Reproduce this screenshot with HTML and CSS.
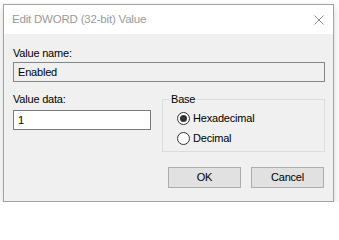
FILE: index.html
```html
<!DOCTYPE html>
<html>
<head>
<meta charset="utf-8">
<link rel="stylesheet" href="styles.css">
</head>
<body>
<div class="window">
  <div class="titlebar">
    <span class="title">Edit DWORD (32-bit) Value</span>
    <svg class="close" width="10" height="10" viewBox="0 0 10 10"><path d="M0.5 0.5 L9.5 9.5 M9.5 0.5 L0.5 9.5" stroke="#8c8c8c" stroke-width="1" fill="none"/></svg>
  </div>
  <div class="content">
    <div class="label">Value name:</div>
    <div class="field readonly">Enabled</div>
    <div class="row">
      <div class="col">
        <div class="label gap3">Value data:</div>
        <div class="field edit">1</div>
      </div>
      <fieldset class="group">
        <legend class="legend">Base</legend>
        <div class="radios">
          <div class="radio"><span class="circle checked"></span><span>Hexadecimal</span></div>
          <div class="radio"><span class="circle"></span><span>Decimal</span></div>
        </div>
      </fieldset>
    </div>
    <div class="buttons">
      <div class="btn">OK</div>
      <div class="btn">Cancel</div>
    </div>
  </div>
</div>
</body>
</html>
```
FILE: styles.css
```css
html, body {
  margin: 0;
  background: #ffffff;
}
body {
  padding: 4px 0 0 3px;
  font-family: "Liberation Sans", Arial, sans-serif;
  font-size: 11px;
  letter-spacing: -0.2px;
  color: #000;
}
.window {
  box-sizing: border-box;
  width: 331px;
  height: 198px;
  border: 1px solid #a3a3a3;
  background: #f0f0f0;
  box-shadow: 0 3px 8px rgba(0, 0, 0, 0.18);
  display: flex;
  flex-direction: column;
}
.titlebar {
  height: 29px;
  background: #ffffff;
  display: flex;
  align-items: center;
  justify-content: space-between;
  padding: 0 9px 0 8px;
}
.title {
  font-size: 11.5px;
  color: #9a9a9a;
  line-height: 15px;
}
.close {
  display: block;
}
.content {
  flex: 1;
  display: flex;
  flex-direction: column;
  padding: 12px 8px 0 9px;
}
.label {
  line-height: 15px;
  margin-bottom: 1px;
}
.label.gap3 {
  margin-bottom: 3px;
}
.field {
  box-sizing: border-box;
  height: 20px;
  border: 1px solid #7f7f7f;
  padding-left: 4px;
  line-height: 18px;
}
.readonly {
  background: #f0f0f0;
  border-color: #858585;
}
.edit {
  background: #ffffff;
  border-color: #7a7a7a;
}
.row {
  display: flex;
  gap: 11px;
  margin-top: 10px;
}
.col {
  width: 138px;
}
.group {
  flex: 1;
  margin: 0;
  padding: 0;
  border: 1px solid #dcdcdc;
  min-width: 0;
}
.legend {
  margin-left: 7px;
  padding: 0 1px;
  line-height: 15px;
}
.radios {
  padding: 1px 0 3px 14px;
}
.radio {
  height: 20px;
  display: flex;
  align-items: center;
  gap: 3px;
}
.circle {
  box-sizing: border-box;
  width: 13px;
  height: 13px;
  border: 1px solid #333;
  border-radius: 50%;
  background: #fff;
  display: flex;
  align-items: center;
  justify-content: center;
}
.circle.checked::after {
  content: "";
  width: 7px;
  height: 7px;
  border-radius: 50%;
  background: #333;
}
.buttons {
  display: flex;
  justify-content: flex-end;
  gap: 10px;
  margin-top: 15px;
  padding-right: 1px;
}
.btn {
  box-sizing: border-box;
  width: 73px;
  height: 21px;
  border: 1px solid #adadad;
  background: #e1e1e1;
  text-align: center;
  line-height: 19px;
}
```
